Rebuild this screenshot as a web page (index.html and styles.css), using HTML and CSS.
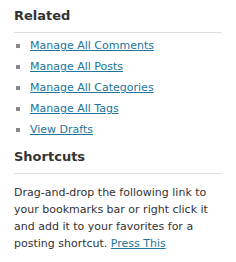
FILE: index.html
```html
<!DOCTYPE html>
<html lang="en">
<head>
    <meta charset="UTF-8">
    <title>Related</title>
    <link rel="stylesheet" href="styles.css">
</head>
<body>
    <div class="sidebar">
        <h3 class="section-title">Related</h3>
        <ul class="related-list">
            <li><a href="#">Manage All Comments</a></li>
            <li><a href="#">Manage All Posts</a></li>
            <li><a href="#">Manage All Categories</a></li>
            <li><a href="#">Manage All Tags</a></li>
            <li><a href="#">View Drafts</a></li>
        </ul>

        <h3 class="section-title">Shortcuts</h3>
        <p class="shortcut-text">Drag-and-drop the following link to your bookmarks bar or right click it and add it to your favorites for a posting shortcut. <a href="#">Press This</a></p>
    </div>
</body>
</html>
```

FILE: styles.css
```css
body {
    margin: 0;
    background: #fff;
    font-family: "DejaVu Sans", Verdana, sans-serif;
    color: #333;
}

.sidebar {
    padding: 0 14px;
}

.section-title {
    margin: 0;
    padding: 8px 0;
    font-size: 13px;
    line-height: 16px;
    font-weight: bold;
    color: #333;
    border-bottom: 1px solid #dfdfdf;
}

.related-list {
    list-style: none;
    margin: 0;
    padding: 2px 0 1px;
}

.related-list li {
    display: flex;
    align-items: center;
    gap: 10px;
    height: 21px;
    font-size: 11px;
}

.related-list li::before {
    content: "";
    width: 4px;
    height: 4px;
    margin-left: 2px;
    background: #888;
}

a {
    color: #21759b;
}

.shortcut-text {
    margin: 10px 0 0;
    font-size: 11px;
    line-height: 17px;
}
```
